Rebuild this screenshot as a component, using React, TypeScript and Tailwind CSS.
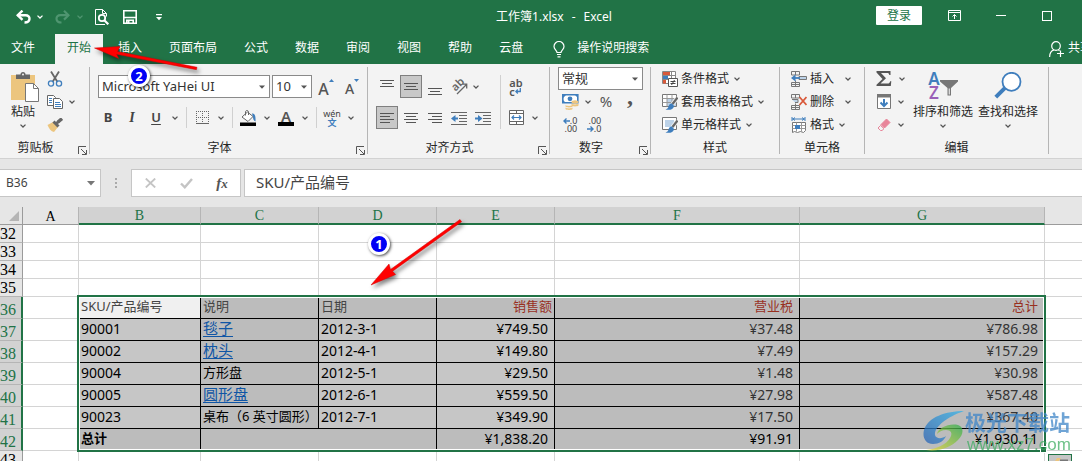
import React from "react";

interface RowData {
  no: number;
  sku: string;
  desc: string;
  link?: boolean;
  date: string;
  sales: string;
  tax: string;
  total: string;
}

const tabs = ["文件", "开始", "插入", "页面布局", "公式", "数据", "审阅", "视图", "帮助", "云盘"];

const columns = ["A", "B", "C", "D", "E", "F", "G"];

const rows: RowData[] = [
  { no: 37, sku: "90001", desc: "毯子", link: true, date: "2012-3-1", sales: "¥749.50", tax: "¥37.48", total: "¥786.98" },
  { no: 38, sku: "90002", desc: "枕头", link: true, date: "2012-4-1", sales: "¥149.80", tax: "¥7.49", total: "¥157.29" },
  { no: 39, sku: "90004", desc: "方形盘", date: "2012-5-1", sales: "¥29.50", tax: "¥1.48", total: "¥30.98" },
  { no: 40, sku: "90005", desc: "圆形盘", link: true, date: "2012-6-1", sales: "¥559.50", tax: "¥27.98", total: "¥587.48" },
  { no: 41, sku: "90023", desc: "桌布（6 英寸圆形）", date: "2012-7-1", sales: "¥349.90", tax: "¥17.50", total: "¥367.40" },
];

function Chevron({ className = "" }: { className?: string }) {
  return (
    <svg viewBox="0 0 6 4" className={`h-1 w-1.5 ${className}`} fill="none" stroke="currentColor" strokeWidth="1.3">
      <path d="M.5.6 3 3 5.5.6" />
    </svg>
  );
}

// 按钮旁边的小箭头
function Drop({ label, className = "w-3.5" }: { label: string; className?: string }) {
  return (
    <button aria-label={label} className={`flex h-[23px] items-center justify-center text-[#555] ${className}`}>
      <Chevron />
    </button>
  );
}

function Tool({ label, active, children }: { label: string; active?: boolean; children: React.ReactNode }) {
  return (
    <button aria-label={label} className="flex h-[23px] w-6 shrink-0 items-center justify-center">
      <span
        className={
          active
            ? "flex h-[23px] w-[22px] items-center justify-center border border-[#7f7f7f] bg-[#c8c8c8]"
            : "flex h-[23px] w-[22px] items-center justify-center"
        }
      >
        {children}
      </span>
    </button>
  );
}

function Combo({ label, value, className }: { label: string; value: string; className: string }) {
  return (
    <label className={`relative block h-[23px] border border-[#8a8a8a] bg-white ${className}`}>
      <span className="sr-only">{label}</span>
      <select className="block h-full w-full appearance-none bg-transparent pl-[3px] text-[13px] text-[#333] outline-none">
        <option>{value}</option>
      </select>
      <svg viewBox="0 0 6 4" className="pointer-events-none absolute top-[9px] right-1 h-1 w-1.5" fill="#555">
        <path d="M0 .5h6L3 3.8z" />
      </svg>
    </label>
  );
}

function Divider({ className = "h-[21px]" }: { className?: string }) {
  return (
    <span className="flex w-2 shrink-0 items-center justify-center">
      <span className={`w-px bg-[#d0d0d0] ${className}`} />
    </span>
  );
}

interface GroupProps {
  title: string;
  launcher?: boolean;
  className: string;
  children: React.ReactNode;
}

function Group({ title, launcher, className, children }: GroupProps) {
  return (
    <section className={`flex h-[87px] shrink-0 flex-col justify-between border-r border-[#b5b5b5] ${className}`}>
      <div>{children}</div>
      <div className="flex h-3 items-center">
        <h2 className="flex-1 text-center text-xs leading-3">{title}</h2>
        {launcher && (
          <button aria-label={`${title}设置`} className="flex w-[18px] shrink-0 justify-end pr-0.5">
            <svg viewBox="0 0 9 9" className="mt-1 size-[9px]" fill="none" stroke="#555">
              <path d="M.5 8V.5H8M3 3l5 5M8.500 4v4.500H4" />
            </svg>
          </button>
        )}
      </div>
    </section>
  );
}

// 对齐图标，每一项是一条线的 [y, 起点, 终点]
function Lines({ items }: { items: number[][] }) {
  return (
    <svg viewBox="0 0 16 16" className="size-4" stroke="#555" strokeWidth="1" shapeRendering="crispEdges">
      {items.map(([y, a, b]) => (
        <path key={y} d={`M${a} ${y + 0.5}H${b}`} />
      ))}
    </svg>
  );
}

function Indent({ right }: { right?: boolean }) {
  return (
    <svg viewBox="0 0 16 14" className="h-3.5 w-4" fill="none">
      <path d="M0 1.500h16M8 4.500h8M8 7.500h8M8 10.500h8M0 13.500h16" stroke="#666" shapeRendering="crispEdges" />
      <path d={right ? "M0 7.500h4" : "M3 7.500h4"} stroke="#3f7ebd" strokeWidth="2" />
      <path d={right ? "M3 4l4.500 3.500L3 11z" : "M4.500 4 0 7.500 4.500 11z"} fill="#3f7ebd" />
    </svg>
  );
}

function TableBrush({ cell }: { cell?: boolean }) {
  return (
    <svg viewBox="0 0 16 16" className="size-4" fill="none">
      <path d="M.5.5h14v12H.5z" fill="#fff" stroke="#777" />
      {cell ? (
        <path d="M3 3h9v7H3z" fill="#bcd2e8" />
      ) : (
        <>
          <path d="M5 5h9v7H5z" fill="#bcd2e8" />
          <path d="M5 .5v12M10 .5v12M.5 4.500h14M.5 8.500h14" stroke="#999" />
        </>
      )}
      <path d="M15.500 3.500 10.500 10" stroke="#f2f2f2" strokeWidth="4" />
      <path d="M15.500 3.500 10.500 10" stroke="#666" strokeWidth="2.200" />
      <path d="M10 9.500c-2 0-3 1-3.500 3-.3 1.500-1.500 2.500-3 3 3 .8 8 .5 8.500-3.500z" fill="#3f7ebd" />
    </svg>
  );
}

function CellsIcon({ kind }: { kind: "insert" | "delete" }) {
  return (
    <svg viewBox="0 0 16 16" className="size-4" fill="none">
      <path
        d="M.5.5h8v3.500h-8zM4.500.5V4M.5 11.500h8v4h-8zM4.500 9.500v6M.5 13.500h8"
        stroke="#777"
      />
      {kind === "insert" ? (
        <>
          <path d="M8 5.500h7.500v3H8z" fill="#bcd2e8" stroke="#777" />
          <path d="M3 7h6" stroke="#3f7ebd" strokeWidth="1.800" />
          <path d="M4.500 3.500 0 7l4.500 3.500z" fill="#3f7ebd" />
        </>
      ) : (
        <>
          <path d="M1 5.500h6v3H4" fill="#bcd2e8" stroke="#777" />
          <path d="m8.500 3 7 8M15.500 3l-7 8" stroke="#d9593a" strokeWidth="1.800" />
        </>
      )}
    </svg>
  );
}

function MenuRow({ icon, text, gap = "ml-0.5" }: { icon: React.ReactNode; text: string; gap?: string }) {
  return (
    <button className="flex h-[23px] items-center whitespace-nowrap">
      {icon}
      <span className="ml-[3px] text-xs">{text}</span>
      <span className={`flex w-3 justify-center text-[#555] ${gap}`}>
        <Chevron />
      </span>
    </button>
  );
}

function BigButton({ icon, text, className }: { icon: React.ReactNode; text: string; className: string }) {
  return (
    <button className={`flex shrink-0 flex-col items-center pt-[5px] ${className}`}>
      {icon}
      <span className="mt-1 text-xs leading-3 whitespace-nowrap">{text}</span>
      <Chevron className="mt-1.5 text-[#555]" />
    </button>
  );
}

function TitleBar() {
  return (
    <header className="flex h-[34px] items-center bg-[#217346] text-white">
      <div className="flex flex-1 items-center pl-4">
        <button aria-label="撤消">
          <svg viewBox="0 0 15 14" className="h-3.5 w-[15px]" fill="none" stroke="#fff" strokeWidth="2.400">
            <path d="M1.500 5.200H9.500c5.500 0 5.500 7.300-1 7.300" />
            <path d="M6.500.6 1.700 5.200 6.500 9.800" />
          </svg>
        </button>
        <Chevron className="ml-1.5" />
        <button aria-label="恢复" className="ml-3">
          <svg viewBox="0 0 15 14" className="h-3.5 w-[15px]" fill="none" stroke="#4f9570" strokeWidth="2.200">
            <path d="M13.500 5.200H5.500c-5.500 0-5.500 7.300 1 7.300" />
            <path d="M9 .8l4.500 4.400L9 9.600" />
          </svg>
        </button>
        <Chevron className="ml-[7px] text-[#4f9570]" />
        <button aria-label="打印预览" className="ml-3">
          <svg viewBox="0 0 15 16" className="h-4 w-[15px]" fill="none" stroke="#fff">
            <path d="M10 15.500H.5V.5h7l4 4v3M7.500.5v4h4" />
            <circle cx="7" cy="9" r="3.200" strokeWidth="1.800" />
            <path d="m9.300 11.300 4 4" strokeWidth="2.200" />
          </svg>
        </button>
        <button aria-label="保存" className="ml-[13px]">
          <svg viewBox="0 0 14 14" className="size-3.5" fill="none" stroke="#fff" strokeWidth="1.600">
            <path d="M.8.8h12.400v12.400H.8zM1 7.500h12M3.800 13.500v-3.200h6.400v3.200" />
            <path d="M5.500 11v2.500" strokeWidth="2" />
          </svg>
        </button>
        <button aria-label="自定义快速访问工具栏" className="ml-[19px]">
          <svg viewBox="0 0 6 7" className="h-[7px] w-1.5" fill="#fff">
            <path d="M0 0h6v1.200H0zM0 3h6L3 6.200z" />
          </svg>
        </button>
      </div>
      <h1 className="flex gap-2 pl-10 text-xs">
        <span>工作簿1.xlsx</span>
        <span>-</span>
        <span>Excel</span>
      </h1>
      <div className="flex flex-1 items-center justify-end pr-[30px] pb-[3px]">
        <button className="h-[19px] w-[46px] rounded-[1px] bg-white text-xs leading-[18px] text-[#217346]">登录</button>
        <button aria-label="功能区显示选项" className="ml-[26px]">
          <svg viewBox="0 0 13 11" className="h-[11px] w-[13px]" fill="none" stroke="#fff">
            <path d="M.5.5h12v10H.5zM.5 2.500h12M6.500 9V4.500M4.500 6.500l2-2 2 2" />
          </svg>
        </button>
        <button aria-label="最小化" className="ml-[35px] flex h-3 w-2.5 items-center">
          <span className="h-px w-full bg-white" />
        </button>
        <button aria-label="最大化" className="ml-9 size-2.5 border border-white" />
      </div>
    </header>
  );
}

function TabBar() {
  return (
    <nav className="flex h-[30px] gap-[3px] bg-[#217346] text-xs text-white">
      {tabs.map((tab, i) => (
        <button
          key={tab}
          className={
            i === 0
              ? "w-[52px] shrink-0 pb-0.5 pl-[11px] text-left"
              : i === 1
                ? "shrink-0 bg-[#f3f3f3] px-3 pb-0.5 text-[#217346]"
                : "shrink-0 px-3 pb-0.5"
          }
        >
          {tab}
        </button>
      ))}
      <button className="ml-[15px] flex shrink-0 items-center pb-0.5">
        <svg viewBox="0 0 12 17" className="mt-0.5 mr-3 h-[17px] w-3" fill="none" stroke="#fff" strokeWidth="1.200">
          <path d="M4 11.500c0-2-3-3-3-6a5 5 0 0 1 10 0c0 3-3 4-3 6zM4 13.500h4M4.500 15.800h3" />
        </svg>
        操作说明搜索
      </button>
      <button className="ml-auto flex w-[33px] shrink-0 items-center pb-0.5 whitespace-nowrap">
        <svg viewBox="0 0 15 16" className="mt-0.5 mr-1 h-4 w-[15px] shrink-0" fill="none" stroke="#fff" strokeWidth="1.200">
          <circle cx="7" cy="5" r="4.300" />
          <path d="M.6 16c0-4 2-6.500 4.500-7.200M9.500 9l1 .8M11.500 9.500v6.500M8 12.500h7" />
        </svg>
        共享
      </button>
    </nav>
  );
}

function Ribbon() {
  return (
    <div className="flex h-[95px] border-b border-[#d2d2d2] bg-[#f3f3f3] pt-[3px] text-[#262626]">
      <Group title="剪贴板" launcher className="w-[90px]">
        <div className="flex">
          <BigButton
            className="w-[46px]"
            text="粘贴"
            icon={
              <svg viewBox="0 0 32 30" className="ml-1 h-[30px] w-8" fill="none">
                <path d="M2 3h24v25H2z" fill="#ecc57e" />
                <path d="M7 2.500h4.500a2.500 2.500 0 0 1 5 0H21v4.500H7z" fill="#666" />
                <circle cx="14" cy="2.500" r="1" fill="#f3f3f3" />
                <path d="M16.500 11.500h8l5 5v13h-13z" fill="#fff" stroke="#777" />
                <path d="M24.500 11.500v5h5" stroke="#777" />
              </svg>
            }
          />
          <div className="-ml-0.5">
            <Tool label="剪切">
              <svg viewBox="0 0 16 16" className="ml-[-2px] size-4" fill="none">
                <path d="M4 .5 10.500 11M12 .5 5.500 11" stroke="#666" strokeWidth="1.800" />
                <circle cx="4" cy="12.500" r="2.600" stroke="#3f7ebd" strokeWidth="1.300" />
                <circle cx="12" cy="12.500" r="2.600" stroke="#3f7ebd" strokeWidth="1.300" />
              </svg>
            </Tool>
            <div className="flex">
              <Tool label="复制">
                <svg viewBox="0 0 16 14" className="ml-[-2px] h-3.5 w-4" fill="#fff" stroke="#666">
                  <path d="M.5.5h6l2 2v8h-8z" />
                  <path d="M6.500 3.500h6l3 3v7h-9z" />
                  <path d="M2 3.500h3M2 5.500h3M2 7.500h3M8 7.500h5M8 9.500h6M8 11.500h6" stroke="#3f7ebd" />
                </svg>
              </Tool>
              <Drop label="复制选项" className="w-2" />
            </div>
            <Tool label="格式刷">
              <svg viewBox="0 0 16 14" className="ml-[-2px] h-3.5 w-4" fill="none">
                <path d="M.5 7 6 4l5 5-4 5C4 13.500 2 10.500.5 7z" fill="#ecc57e" />
                <path d="m6.500 3.500 5 5M9.500 5.500l2-2" stroke="#666" strokeWidth="3" />
                <path d="m11 4 4-3.500" stroke="#666" strokeWidth="3.400" />
              </svg>
            </Tool>
          </div>
        </div>
      </Group>

      <Group title="字体" launcher className="w-[278px]">
        <div className="flex gap-0.5 pt-2 pl-2">
          <Combo label="字体" value="Microsoft YaHei UI" className="w-[172px]" />
          <Combo label="字号" value="10" className="w-10" />
          <Tool label="增大字号">
            <span className="pt-1 text-base font-medium text-[#555]">A</span>
            <svg viewBox="0 0 5 3" className="mb-3 h-[3px] w-[5px]" fill="#3f7ebd">
              <path d="M0 3 2.500 0 5 3z" />
            </svg>
          </Tool>
          <Tool label="减小字号">
            <span className="pt-1 text-sm font-medium text-[#555]">A</span>
            <svg viewBox="0 0 5 3" className="mb-3 h-[3px] w-[5px]" fill="#3f7ebd">
              <path d="M0 0h5L2.500 3z" />
            </svg>
          </Tool>
        </div>
        <div className="flex pt-2 pl-1.5 text-[#444]">
          <Tool label="加粗">
            <b className="text-[13px]">B</b>
          </Tool>
          <Tool label="倾斜">
            <i className="font-['Liberation_Serif'] text-sm font-bold">I</i>
          </Tool>
          <Tool label="下划线">
            <span className="text-[13px] font-semibold underline underline-offset-2">U</span>
          </Tool>
          <Drop label="下划线选项" />
          <Divider />
          <Tool label="边框">
            <svg viewBox="0 0 13 13" className="size-[13px]" fill="none" stroke="#666" shapeRendering="crispEdges">
              <path d="M.5 0v12M6.500 0v12M12.500 0v12M0 .5h13M0 6.500h13" strokeDasharray="1 1" />
              <path d="M0 12.500h13" />
            </svg>
          </Tool>
          <Drop label="边框选项" />
          <Divider />
          <Tool label="填充颜色">
            <svg viewBox="0 0 16 16" className="size-4" fill="none">
              <path d="M7.500 2 13 6.500 8 11.500 2 7z" fill="#fff" stroke="#666" />
              <path d="M5.500 5.500V2c0-2 3-2 3 0v3" stroke="#666" />
              <path d="M12 3.500c3 0 3.800 2.500 3.500 8-1.800-1-2.500-2-2.500-4.500z" fill="#3f7ebd" />
              <path d="M0 12.500h16V16H0z" fill="#000" />
            </svg>
          </Tool>
          <Drop label="填充颜色选项" />
          <Tool label="字体颜色">
            <span className="flex w-4 flex-col items-center border-b-4 border-black text-[15px] leading-3 font-semibold text-[#555]">
              A
            </span>
          </Tool>
          <Drop label="字体颜色选项" />
          <Divider />
          <Tool label="拼音指南">
            <span className="flex flex-col items-center text-[9px] leading-[9px]">
              <span>wén</span>
              <span className="font-bold text-[#3f7ebd]">文</span>
            </span>
          </Tool>
          <Drop label="拼音选项" />
        </div>
      </Group>

      <Group title="对齐方式" launcher className="w-[182px]">
        <div className="flex pt-2 pl-[7px]">
          <div className="flex w-[121px] flex-col gap-2">
            <div className="flex">
              <Tool label="顶端对齐">
                <Lines items={[[1, 1, 15], [4, 3, 13], [7, 1, 15]]} />
              </Tool>
              <Tool label="垂直居中" active>
                <Lines items={[[4, 1, 15], [7, 3, 13], [10, 1, 15]]} />
              </Tool>
              <Tool label="底端对齐">
                <Lines items={[[9, 1, 15], [12, 3, 13], [15, 1, 15]]} />
              </Tool>
              <Tool label="方向">
                <svg viewBox="0 0 17 17" className="size-[17px]" fill="none" stroke="#666" strokeWidth="1.300">
                  <text x="1" y="11" transform="rotate(-45 6 8)" fontSize="11" fontWeight="600" fill="#666" stroke="none">
                    ab
                  </text>
                  <path d="m6 16 9.500-9.500M11.500 6.200h4.200v4.200" />
                </svg>
              </Tool>
              <Drop label="方向选项" className="w-2.5" />
            </div>
            <div className="flex">
              <Tool label="左对齐" active>
                <Lines items={[[3, 1, 15], [6, 1, 11], [9, 1, 15], [12, 1, 11]]} />
              </Tool>
              <Tool label="居中">
                <Lines items={[[3, 1, 15], [6, 3, 13], [9, 1, 15], [12, 3, 13]]} />
              </Tool>
              <Tool label="右对齐">
                <Lines items={[[3, 1, 15], [6, 5, 15], [9, 1, 15], [12, 5, 15]]} />
              </Tool>
              <Tool label="减少缩进量">
                <Indent />
              </Tool>
              <Tool label="增加缩进量">
                <Indent right />
              </Tool>
            </div>
          </div>
          <Divider className="h-[54px]" />
          <div className="flex flex-col gap-2">
            <Tool label="自动换行">
              <span className="flex flex-col text-[11px] leading-[9px] font-semibold text-[#555]">
                <span>ab</span>
                <span className="flex items-center">
                  c
                  <svg viewBox="0 0 6 6" className="h-1.5 w-1.5" fill="none" stroke="#3f7ebd" strokeWidth="1.300">
                    <path d="M5.300 0v3.500H1M2.800 1.500l-2 2 2 2" />
                  </svg>
                </span>
              </span>
            </Tool>
            <div className="flex">
              <Tool label="合并后居中">
                <svg viewBox="0 0 15 15" className="size-[15px]" fill="none" stroke="#666">
                  <path d="M.5.5h14v14H.5zM.5 3.500h14M.5 11.500h14M7.500.5v3M7.500 11.500v3" fill="#fff" />
                  <path d="M3 7.500h9M5 5.500l-2 2 2 2M10 5.500l2 2-2 2" stroke="#3f7ebd" strokeWidth="1.200" />
                </svg>
              </Tool>
              <Drop label="合并选项" />
            </div>
          </div>
        </div>
      </Group>

      <Group title="数字" launcher className="w-[101px]">
        <div className="flex flex-col pl-2">
          <Combo label="数字格式" value="常规" className="w-[85px]" />
          <div className="flex">
            <Tool label="会计数字格式">
              <svg viewBox="0 0 17 16" className="h-4 w-[17px]" fill="none">
                <path d="M.8.8h15v8H.8z" fill="#fff" stroke="#3f7ebd" strokeWidth="1.600" />
                <circle cx="8" cy="4.800" r="2.400" fill="#3f7ebd" />
                <path d="M1 1h3L1 4zM16 1h-3l3 3zM1 9V6l3 3z" fill="#3f7ebd" />
                <ellipse cx="13" cy="8" rx="3.500" ry="1.700" fill="#ecc57e" />
                <path d="M9.500 9.500c1 1.200 6 1.200 7 0v2c-1 1.200-6 1.200-7 0zM3.500 11c1 1.200 6 1.200 7 0v1.500c-1 1.200-6 1.200-7 0zM3.500 13.500c1 1.200 6 1.200 7 0V15c-1 1.200-6 1.200-7 0z" fill="#ecc57e" />
              </svg>
            </Tool>
            <Drop label="会计格式选项" className="w-3" />
            <Tool label="百分比样式">
              <span className="text-[15px] text-[#555]">%</span>
            </Tool>
            <Tool label="千位分隔样式">
              <span className="pb-3 font-['Liberation_Serif'] text-2xl leading-5 font-bold text-[#555]">,</span>
            </Tool>
          </div>
          <div className="flex">
            <Tool label="增加小数位数">
              <span className="text-right text-[9px] leading-[8px] text-[#444]">
                <span className="flex items-center">
                  <svg viewBox="0 0 7 6" className="h-1.5 w-[7px]" fill="none" stroke="#3f7ebd" strokeWidth="1.400">
                    <path d="M7 3H1M3.500.5 1 3l2.500 2.500" />
                  </svg>
                  .0
                </span>
                .00
              </span>
            </Tool>
            <Tool label="减少小数位数">
              <span className="text-right text-[9px] leading-[8px] text-[#444]">
                .00
                <span className="flex items-center">
                  <svg viewBox="0 0 7 6" className="h-1.5 w-[7px]" fill="none" stroke="#3f7ebd" strokeWidth="1.400">
                    <path d="M0 3h6M3.500.5 6 3 3.500 5.500" />
                  </svg>
                  .0
                </span>
              </span>
            </Tool>
          </div>
        </div>
      </Group>

      <Group title="样式" className="w-[129px]">
        <div className="flex flex-col items-start pl-[11px]">
          <MenuRow
            text="条件格式"
            icon={
              <svg viewBox="0 0 16 16" className="size-4" fill="none">
                <path d="M.5.5h13v12H.5z" fill="#fff" stroke="#888" />
                <path d="M1 1h7v3H1zM1 9h3v3.500H1z" fill="#d9593a" />
                <path d="M1 5h5v3H1z" fill="#3f7ebd" />
                <path d="M9.500.5v12M.5 4.500h13M.5 8.500h13" stroke="#888" />
                <path d="M6.500 7.500h9v8h-9z" fill="#fff" stroke="#555" />
                <path d="M8.500 10.500h5M8.500 12.500h5M12.500 9l-3 5" stroke="#444" />
              </svg>
            }
          />
          <MenuRow text="套用表格格式" icon={<TableBrush />} />
          <MenuRow text="单元格样式" icon={<TableBrush cell />} />
        </div>
      </Group>

      <Group title="单元格" className="w-[85px]">
        <div className="flex flex-col items-start pl-[11px]">
          <MenuRow text="插入" gap="ml-2" icon={<CellsIcon kind="insert" />} />
          <MenuRow text="删除" gap="ml-2" icon={<CellsIcon kind="delete" />} />
          <MenuRow
            text="格式"
            icon={
              <svg viewBox="0 0 16 16" className="size-4" fill="none">
                <path d="M1 2h13M1 0v4M14 0v4M4 .5 2 2l2 1.500M11 .5 13 2l-2 1.500" stroke="#3f7ebd" />
                <path d="M1.500 5.500h13v8l-2 2-3-1-3 1-3-1-2 1z" fill="#fff" stroke="#777" />
                <path d="M5.500 5.500v9M10.500 5.500v9M1.500 8.500h13M1.500 11.500h13" stroke="#999" />
                <path d="M4 8h5v4H4z" fill="#3f7ebd" />
              </svg>
            }
          />
        </div>
      </Group>

      <Group title="编辑" className="w-[184px]">
        <div className="flex">
          <div className="w-12 shrink-0 pl-[7px]">
            <div className="flex">
              <Tool label="自动求和">
                <svg viewBox="0 0 16 15" className="h-[15px] w-4" fill="#555">
                  <path d="M.5 0h14v4h-1.200c-.2-1.400-.8-2-2.300-2H5l5 5.200L4.500 12.500H11.500c1.600 0 2.300-.8 2.600-2.300h1.200L14.800 15H.5v-1.200L6.500 8 .5 1.400z" />
                </svg>
              </Tool>
              <Drop label="求和选项" className="w-3" />
            </div>
            <div className="flex">
              <Tool label="填充">
                <svg viewBox="0 0 14 15" className="h-[15px] w-3.5" fill="none">
                  <path d="M.5.5h13v14H.5z" fill="#fff" stroke="#777" />
                  <path d="M0 0h14v3.500H0z" fill="#777" />
                  <path d="M7 5v7M3.500 8.500 7 12l3.500-3.500" stroke="#3f7ebd" strokeWidth="2" />
                </svg>
              </Tool>
              <Drop label="填充选项" className="w-2.5" />
            </div>
            <div className="flex">
              <Tool label="清除">
                <svg viewBox="0 0 14 14" className="size-3.5" fill="none">
                  <path d="m9.500 1 3.500 3.500L7.500 10 4 6.500z" fill="#e8859a" stroke="#e8859a" />
                  <path d="M3.500 7.500 1 10l2.500 2.500h1.500L7 10.700z" stroke="#e8859a" />
                </svg>
              </Tool>
              <Drop label="清除选项" className="w-2.5" />
            </div>
          </div>
          <div className="flex gap-[5px]">
            <BigButton
              className="w-[60px]"
              text="排序和筛选"
              icon={
                <span className="flex h-[30px]">
                  <span className="flex w-3 flex-col text-center text-[17px] leading-[14px] font-semibold">
                    <span className="text-[#3f7ebd]">A</span>
                    <span className="text-[#9a5fb8]">Z</span>
                  </span>
                  <svg viewBox="0 0 18 16" className="mt-2 h-4 w-[18px]" fill="#777">
                    <path d="M0 0h18v1.500L11 8v7.500H7.500V8L0 1.500z" />
                    <path d="M8.700 8.500h1.100v6H8.700z" fill="#f3f3f3" />
                  </svg>
                </span>
              }
            />
            <BigButton
              className="w-[60px]"
              text="查找和选择"
              icon={
                <svg viewBox="0 0 28 30" className="h-[30px] w-7" fill="none" stroke="#3f7ebd">
                  <circle cx="17.500" cy="9.800" r="9" fill="#fff" strokeWidth="1.800" />
                  <path d="M10.800 16.200 1.800 25.200" strokeWidth="4" />
                </svg>
              }
            />
          </div>
        </div>
      </Group>
    </div>
  );
}

function FormulaBar() {
  return (
    <div className="flex bg-[#e6e6e6] py-[10px] text-[#444]">
      <div className="flex h-7 w-[101px] shrink-0 items-center border border-l-0 border-[#c6c6c6] bg-white">
        <input aria-label="名称框" defaultValue="B36" className="w-20 bg-transparent pl-1.5 text-xs outline-none" />
        <button aria-label="名称列表" className="ml-[7px]">
          <svg viewBox="0 0 8 5" className="h-[5px] w-2" fill="#777">
            <path d="M0 0h8L4 4.500z" />
          </svg>
        </button>
      </div>
      <div className="flex w-[30px] shrink-0 flex-col items-center justify-center gap-0.5">
        <span className="size-0.5 bg-[#aaa]" />
        <span className="size-0.5 bg-[#aaa]" />
        <span className="size-0.5 bg-[#aaa]" />
      </div>
      <div className="flex h-7 w-[110px] shrink-0 items-center border border-[#c6c6c6] bg-white">
        <button aria-label="取消" className="flex w-9 justify-center">
          <svg viewBox="0 0 11 10" className="h-2.5 w-[11px]" stroke="#c4c4c4" strokeWidth="1.800">
            <path d="m.8.5 9.400 9M10.200.5.8 9.500" />
          </svg>
        </button>
        <button aria-label="输入" className="flex w-9 justify-center">
          <svg viewBox="0 0 13 11" className="h-[11px] w-[13px]" fill="none" stroke="#c4c4c4" strokeWidth="2.400">
            <path d="M1 5.500 4.800 9.300 12 1" />
          </svg>
        </button>
        <button
          aria-label="插入函数"
          className="w-9 font-['Liberation_Serif'] text-[15px] leading-5 font-bold text-[#555] italic"
        >
          f<span className="text-[13px]">x</span>
        </button>
      </div>
      <input
        aria-label="编辑栏"
        defaultValue="SKU/产品编号"
        className="ml-[3px] h-7 min-w-0 flex-1 border border-r-0 border-[#c6c6c6] bg-white pb-1 pl-[11px] text-[15px] outline-none"
      />
    </div>
  );
}

const rowHead = "border-r border-b border-r-[#9b9b9b] border-b-[#b5b5b5] bg-[#e6e6e6] text-left align-bottom font-['Liberation_Serif'] text-base leading-[16px] font-normal";
const rowHeadOn = "border-r-2 border-b border-r-[#217346] border-b-[#b5b5b5] bg-[#d2d2d2] text-left align-bottom font-['Liberation_Serif'] text-base leading-[16px] font-normal text-[#217346]";
const empty = "border-r border-b border-[#d4d4d4]";
const last = "border-b border-[#d4d4d4]";
const cell = "overflow-hidden border-r border-b border-black pl-0.5 text-left align-top leading-[19px] font-normal whitespace-nowrap";
const num = "border-r border-b border-black pr-[6px] text-right align-top leading-[19px] text-sm font-normal";
const moneyHead = "border-r border-b border-black bg-[#bcbcbc] text-right align-top leading-[19px] font-normal text-[#98301f]";

function EmptyRow({ no }: { no: number }) {
  return (
    <tr className="h-[18px]">
      <th className={rowHead}>{no}</th>
      {columns.map((c) => (
        <td key={c} className={empty} />
      ))}
      <td className={last} />
    </tr>
  );
}

function Sheet() {
  return (
    <div className="relative">
      <table className="w-full table-fixed border-separate border-spacing-0 bg-white text-[13px] text-black [&_td]:py-0 [&_th]:py-0">
        <colgroup>
          <col className="w-[23px]" />
          <col className="w-[56px]" />
          <col className="w-[122px]" />
          <col className="w-[118px]" />
          <col className="w-[118px]" />
          <col className="w-[118px]" />
          <col className="w-[245px]" />
          <col className="w-[245px]" />
          <col />
        </colgroup>
        <thead>
          <tr className="h-[18px]">
            <td className="border-r border-b border-[#9b9b9b] bg-[#e6e6e6]">
              <svg viewBox="0 0 10 10" className="ml-auto mr-[3px] size-2.5" fill="#b5b5b5">
                <path d="M10 0v10H0z" />
              </svg>
            </td>
            {columns.map((c, i) => (
              <th
                key={c}
                className={
                  i === 0
                    ? "border-r border-b border-r-[#b5b5b5] border-b-[#9b9b9b] bg-[#e6e6e6] align-bottom font-['Liberation_Serif'] text-sm leading-[14px] font-normal"
                    : "border-r border-b-2 border-r-[#b5b5b5] border-b-[#217346] bg-[#d2d2d2] align-bottom font-['Liberation_Serif'] text-sm leading-[14px] font-normal text-[#217346]"
                }
              >
                {c}
              </th>
            ))}
            <td className="border-b border-[#9b9b9b] bg-[#e6e6e6]" />
          </tr>
        </thead>
        <tbody>
          {[32, 33, 34, 35].map((no) => (
            <EmptyRow key={no} no={no} />
          ))}
          <tr className="h-[22px] text-[#444]">
            <th className={rowHeadOn}>36</th>
            <td className={empty} />
            <th className={`${cell} bg-[#f0f0f0]`}>SKU/产品编号</th>
            <th className={`${cell} bg-[#bcbcbc]`}>说明</th>
            <th className={`${cell} bg-[#bcbcbc]`}>日期</th>
            <th className={`${moneyHead} pr-0.5`}>销售额</th>
            <th className={`${moneyHead} pr-[6px]`}>营业税</th>
            <th className={`${moneyHead} pr-[6px]`}>总计</th>
            <td className={last} />
          </tr>
          {rows.map((row) => (
            <tr key={row.no} className="h-[22px]">
              <th className={rowHeadOn}>{row.no}</th>
              <td className={empty} />
              <td className={`${cell} bg-[#c6c6c6] text-sm`}>{row.sku}</td>
              <td className={`${cell} bg-[#bcbcbc]`}>
                {row.link ? (
                  <a href="#" className="text-[15px] text-[#0f55a5] underline underline-offset-2">
                    {row.desc}
                  </a>
                ) : (
                  row.desc
                )}
              </td>
              <td className={`${cell} bg-[#c6c6c6] text-sm`}>{row.date}</td>
              <td className={`${num} bg-[#c6c6c6]`}>{row.sales}</td>
              <td className={`${num} bg-[#bcbcbc] text-[#333]`}>{row.tax}</td>
              <td className={`${num} bg-[#bcbcbc] text-[#333]`}>{row.total}</td>
              <td className={last} />
            </tr>
          ))}
          <tr className="h-[22px]">
            <th className={rowHeadOn}>42</th>
            <td className={empty} />
            <td className={`${cell} bg-[#bcbcbc]`}>
              <b>总计</b>
            </td>
            <td colSpan={2} className={`${cell} bg-[#bcbcbc]`} />
            <td className={`${num} bg-[#bcbcbc]`}>¥1,838.20</td>
            <td className={`${num} bg-[#bcbcbc]`}>¥91.91</td>
            <td className={`${num} bg-[#bcbcbc]`}>¥1,930.11</td>
            <td className={last} />
          </tr>
          <EmptyRow no={43} />
        </tbody>
      </table>

      {/* 选区边框和填充柄 */}
      <div className="pointer-events-none absolute top-[88px] left-[77px] h-[157px] w-[969px] border-2 border-[#217346] inset-ring inset-ring-white">
        <span className="absolute -right-[3px] -bottom-[3px] size-[7px] border border-white bg-[#217346]" />
      </div>

      <button
        aria-label="快速分析"
        className="absolute top-[247px] left-[1048px] h-6 w-6 border border-[#217346] bg-[#c6c6c6]"
      >
        <svg viewBox="0 0 22 22" className="size-[22px]" fill="none">
          <path d="M8 3 4 9h4l-3 6 8-8H9l3-4z" fill="#ecc57e" />
          <path d="M11 4.500h8v4h-8z" fill="#777" />
        </svg>
      </button>
    </div>
  );
}

function Watermark() {
  return (
    <div className="pointer-events-none absolute top-[410px] left-[922px] flex opacity-75">
      <svg viewBox="0 0 42 42" className="h-[42px] w-[42px] shrink-0">
        <defs>
          <linearGradient id="blue" x1="0" y1="1" x2="1" y2="0">
            <stop offset="0" stopColor="#2a62b4" />
            <stop offset="1" stopColor="#35b5ea" />
          </linearGradient>
          <linearGradient id="green" x1="0" y1="1" x2="1" y2="0">
            <stop offset="0" stopColor="#f0d63a" />
            <stop offset="1" stopColor="#2fae4e" />
          </linearGradient>
        </defs>
        <path
          d="M42 1C24 1 6 7 2 20c-2 8 2 14 9 14 6 0 11-3 13-8-4 3-10 3-11-1-1-8 12-18 29-24z"
          fill="url(#blue)"
        />
        <path
          d="M15 24c1-6 12-11 21-9 6 2 6 9 0 15-7 7-19 12-32 10 10-1 20-5 24-12 3-5 1-8-4-8-4 0-7 2-9 4z"
          fill="url(#green)"
        />
      </svg>
      <div className="pl-px whitespace-nowrap">
        <div className="text-[21px] leading-[24px] font-bold text-[#3f86c8]">极光下载站</div>
        <div className="pl-0.5 font-['Liberation_Sans'] text-[17px] leading-[22px] text-[#3fae62]">www.xz7.com</div>
      </div>
    </div>
  );
}

function Badge({ n, className }: { n: number; className: string }) {
  return (
    <span
      className={`absolute flex size-[22px] items-center justify-center rounded-full border-[3px] border-white bg-[#0000f5] text-[13px] leading-none font-bold text-white shadow-[1px_1px_3px_rgba(0,0,0,0.7)] ${className}`}
    >
      {n}
    </span>
  );
}

export default function App() {
  return (
    <div className="relative h-screen overflow-hidden bg-[#e6e6e6] font-['Noto_Sans','Noto_Sans_CJK_SC',sans-serif]">
      <TitleBar />
      <TabBar />
      <Ribbon />
      <FormulaBar />
      <Sheet />
      <Watermark />

      {/* 步骤标注 */}
      <Badge n={1} className="top-[233px] left-[368px]" />
      <Badge n={2} className="top-[65px] left-[128px]" />
      <svg
        viewBox="0 0 480 300"
        className="pointer-events-none absolute top-0 left-0 h-[300px] w-[480px] drop-shadow-[2px_3px_2px_rgba(0,0,0,0.5)]"
        fill="#f00"
        stroke="#d00000"
        strokeWidth=".5"
      >
        <path d="M94.500 48 120 46.500l-2.500 5 79.500 15.800-.6 2.400-79.800-15.500 2 4.300z" />
        <path d="M371 285l18-21 1.500 5.500 69.500-50 1.600 2.300-69 49.400 3 3.300z" />
      </svg>
    </div>
  );
}
